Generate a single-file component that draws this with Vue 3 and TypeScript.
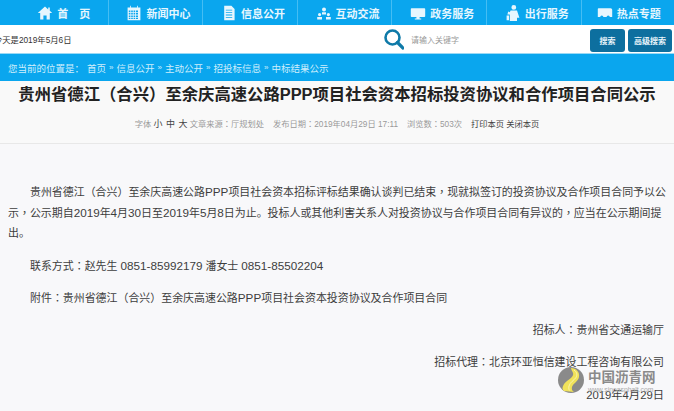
<script setup lang="ts">
type NavItem = { label: string; icon: string }
type Run = { text: string; kind: string }

const navItems: NavItem[] = [
  { label: '首　页', icon: 'home' },
  { label: '新闻中心', icon: 'calendar' },
  { label: '信息公开', icon: 'doc' },
  { label: '互动交流', icon: 'people' },
  { label: '政务服务', icon: 'monitor' },
  { label: '出行服务', icon: 'person' },
  { label: '热点专题', icon: 'bus' },
]

const crumbs = ['首页', '信息公开', '主动公开', '招投标信息', '中标结果公示']

const intro =
  '贵州省德江（合兴）至余庆高速公路PPP项目社会资本招标评标结果确认谈判已结束，现就拟签订的投资协议及合作项目合同予以公示，公示期自2019年4月30日至2019年5月8日为止。投标人或其他利害关系人对投资协议与合作项目合同有异议的，应当在公示期间提出。'
const contact = '联系方式：赵先生 0851-85992179 潘女士 0851-85502204'
const attachment = '附件：贵州省德江（合兴）至余庆高速公路PPP项目社会资本投资协议及合作项目合同'

// latin text and the centred comma/colon need their own font
const toRuns = (value: string): Run[] =>
  (value.match(/[A-Za-z0-9-]+|[，：]|[^A-Za-z0-9\-，：]+/g) ?? []).map((text) => ({
    text,
    kind: /^[A-Za-z0-9-]/.test(text) ? 'lat' : /^[，：]/.test(text) ? 'punct' : '',
  }))
</script>

<template>
  <div class="page">
    <nav class="nav">
      <a v-for="item in navItems" :key="item.label" class="nav-item">
        <svg class="nav-icon" viewBox="0 0 20 20" fill="#e6f6fe">
          <path v-if="item.icon === 'home'" d="M10 2 1 10h3v8h4v-5h4v5h4v-8h3l-3-2.7V3h-2v2.500z" />
          <path v-else-if="item.icon === 'calendar'" fill-rule="evenodd" d="M2 3h3V1h1v2h8V1h1v2h3v16H2zM3.500 7v2h2V7zm3 0v2h2V7zm3 0v2h2V7zm3 0v2h2.500V7zm-9 3v2h2v-2zm3 0v2h2v-2zm3 0v2h2v-2zm3 0v2h2.500v-2zm-9 3v2h2v-2zm3 0v2h2v-2zm3 0v2h2v-2zm3 0v2h2.500v-2zm-9 3v1.500h2V16zm3 0v1.500h2V16zm3 0v1.500h2V16zm3 0v1.500h2.500V16z" />
          <path v-else-if="item.icon === 'doc'" fill-rule="evenodd" d="M4 1h9l4 4v14H4zM6 6v1h8V6zm0 3v1h8V9zm0 3v1h8v-1zm0 3v1h8v-1z" />
          <path v-else-if="item.icon === 'people'" d="M10 3a2.500 2.500 0 1 1 0 5 2.500 2.500 0 0 1 0-5zM7.500 9h5v3h-5zM4.500 10a2 2 0 1 1 0 4 2 2 0 0 1 0-4zM1.500 15h6v3h-6zM15.500 10a2 2 0 1 1 0 4 2 2 0 0 1 0-4zM12.500 15h6v3h-6z" />
          <path v-else-if="item.icon === 'monitor'" d="M2 4h16q1 0 1 1v9q0 1-1 1h-6v2h2v1H6v-1h2v-2H2q-1 0-1-1V5q0-1 1-1z" />
          <path v-else-if="item.icon === 'person'" d="M11 0a3 3 0 1 1 0 6 3 3 0 0 1 0-6zM7 7h8l3 9h-3v4H6v-8H3l1-4 2 1zM2 13h3v6H2z" />
          <path v-else d="M1 5q0-1 1-1h15q2 0 2 2v9h-3a2 2 0 0 0-4 0H8a2 2 0 0 0-4 0H1z" />
        </svg>
        <span>{{ item.label }}</span>
      </a>
    </nav>

    <div class="tools">
      <span class="today">今天是2019年5月6日</span>
      <div class="search">
        <svg class="search-icon" viewBox="0 0 20 21" fill="none" stroke="#0f7aa8">
          <circle cx="8.500" cy="8.500" r="7" stroke-width="2.600" />
          <path d="m13.500 13.500 5.500 5.500" stroke-width="3.200" stroke-linecap="round" />
        </svg>
        <span class="placeholder">请输入关键字</span>
      </div>
      <button class="btn small">搜索</button>
      <button class="btn">高级搜索</button>
    </div>

    <div class="crumbs">
      <span>您当前的位置是：</span>
      <template v-for="(crumb, i) in crumbs" :key="crumb">
        <span v-if="i > 0" class="sep">»</span>
        <span>{{ crumb }}</span>
      </template>
    </div>

    <header class="head">
      <h1>贵州省德江（合兴）至余庆高速公路PPP项目社会资本招标投资协议和合作项目合同公示</h1>
      <div class="meta">
        <span>字体 <b>小 中 大</b> 文章来源<i class="punct">：</i>厅规划处</span>
        <span>发布日期<i class="punct">：</i>2019年04月29日 17:11</span>
        <span>浏览数<i class="punct">：</i>503次</span>
        <span class="meta-links">打印本页 关闭本页</span>
      </div>
    </header>

    <article class="content">
      <p v-for="(line, n) in [intro, contact, attachment]" :key="n" class="para" :class="{ contact: n > 0 }">
        <template v-for="(run, i) in toRuns(line)" :key="i"><span v-if="run.kind" :class="run.kind">{{ run.text }}</span><template v-else>{{ run.text }}</template></template>
      </p>
      <p class="right first">招标人<span class="punct">：</span>贵州省交通运输厅</p>
      <p class="right second">招标代理<span class="punct">：</span>北京环亚恒信建设工程咨询有限公司</p>
      <p class="right date">2019年4月29日</p>
    </article>

    <div class="watermark">
      <svg class="mark-logo" viewBox="0 0 26 26">
        <circle cx="13" cy="13" r="13" fill="#8a8a8a" />
        <path d="M13 1c5 0 9 4 8 9-1 5-6 6-7 10-.5 2 0 4 2 5L6 24c-3-2-1-7 3-10s7-5 6-8c-.5-2-2-3-2-5z" fill="#f0e25a" />
        <path d="M16 3c3 2 3.500 5 2 7.500-2 3-6 4.500-7 8.500-.3 1.500-.3 3 .4 4.500" fill="none" stroke="#fbf7c4" stroke-width=".8" />
      </svg>
      <div class="mark-text">
        <div class="mark-name">中国沥青网</div>
        <div class="mark-url">www.sinoasphalt.com</div>
      </div>
    </div>
  </div>
</template>

<style scoped>
.page {
  position: relative;
  width: 674px;
  height: 411px;
  overflow: hidden;
  background: #f8f8fa;
  color: #333;
  font-family: "Liberation Sans", "Noto Sans CJK SC", sans-serif;
}

.nav {
  display: grid;
  grid-template-columns: repeat(7, 94.6px);
  height: 25px;
  padding-left: 14px;
  background: #0aa6ee;
}

.nav-item {
  display: flex;
  align-items: center;
  justify-content: center;
  gap: 4px;
  padding-left: 6px;
  border-right: 1px solid #45bdf3;
  color: #e6f6fe;
  font-size: 11px;
  font-weight: 700;
  white-space: nowrap;
}

.nav-item:last-child {
  padding-left: 0;
  border-right: 0;
}

.nav-icon {
  width: 16px;
  height: 16px;
  flex: none;
}

.tools {
  display: flex;
  align-items: center;
  height: 29px;
  padding-right: 2px;
  background: #fff;
  border-bottom: 1px solid #9ad9f5;
  box-sizing: border-box;
}

.today {
  margin-left: -6px;
  font-size: 8.300px;
  color: #333;
}

.search {
  display: flex;
  align-items: center;
  gap: 7px;
  margin-left: auto;
  margin-right: 7px;
  width: 196px;
}

.search-icon {
  width: 20px;
  height: 21px;
}

.placeholder {
  font-size: 8px;
  color: #999;
}

.btn {
  width: 44px;
  height: 23px;
  margin: 3px 0 0 3px;
  padding: 0;
  border: 0;
  border-radius: 3px;
  background: #0d6f9f;
  color: #e8f4fa;
  font-family: inherit;
  font-size: 8px;
  font-weight: 700;
}

.btn.small {
  width: 35px;
}

.crumbs {
  display: flex;
  align-items: center;
  gap: 3px;
  height: 27px;
  padding-left: 8px;
  background: #0aa6ee;
  color: #cfeefc;
  font-size: 9.500px;
}

.sep {
  font-size: 8px;
}

.head {
  height: 62px;
  background: #f9f9f9;
  border-bottom: 1px solid #e8e8e8;
  text-align: center;
}

h1 {
  margin: 0;
  padding: 2px 0 0 0;
  font-size: 16.350px;
  line-height: 22px;
  color: #222;
  white-space: nowrap;
}

.meta {
  display: flex;
  justify-content: center;
  gap: 9px;
  margin-top: 14px;
  font-size: 8.250px;
  line-height: 11px;
  color: #999;
}

.meta b {
  font-size: 9px;
  font-weight: 400;
  word-spacing: 1px;
  color: #444;
}

.meta i {
  font-style: normal;
}

.meta-links {
  color: #444;
}

.content {
  padding: 0 7px 0 8px;
  font-size: 10.950px;
  color: #3d3d3d;
}

.lat {
  font-size: 11.700px;
}

.lat,
.punct {
  line-height: 1;
}

.punct {
  font-family: "Noto Sans CJK TC", sans-serif;
}

p {
  margin: 0;
}

.para {
  margin-top: 38px;
  line-height: 20.500px;
  text-indent: 22px;
}

.contact {
  margin-top: 12px;
}

.right {
  text-align: right;
  padding-right: 3px;
  line-height: 16px;
}

.first {
  margin-top: 13px;
}

.second {
  margin-top: 16px;
}

.date {
  margin-top: 17px;
  font-size: 11.300px;
}

.watermark {
  position: absolute;
  left: 558px;
  top: 367px;
  display: flex;
  gap: 4px;
}

.mark-logo {
  width: 26px;
  height: 26px;
}

.mark-text {
  padding-top: 2px;
}

.mark-name {
  font-size: 13.500px;
  line-height: 17px;
  font-weight: 700;
  color: #8a8a8a;
  white-space: nowrap;
}

.mark-url {
  font-size: 6.800px;
  line-height: 7px;
  color: #aaa;
  white-space: nowrap;
}
</style>
